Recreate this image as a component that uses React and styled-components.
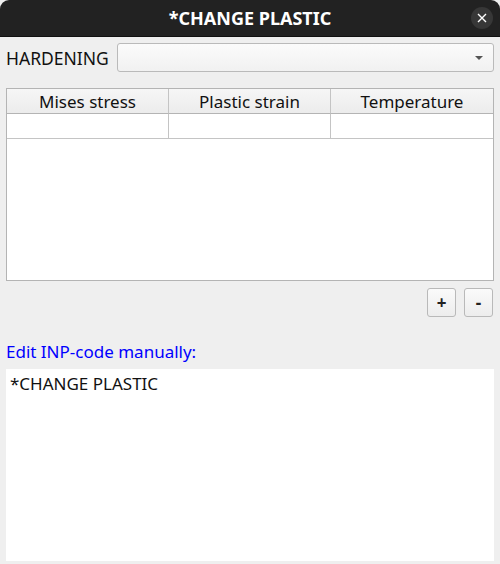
import React from 'react';
import styled, { createGlobalStyle } from 'styled-components';

const GlobalStyle = createGlobalStyle`
  html, body {
    margin: 0;
    padding: 0;
    background: #efefef;
  }
  body {
    font-family: 'Noto Sans', 'DejaVu Sans', sans-serif;
    color: #111111;
  }
`;

const Window = styled.div`
  width: 500px;
  height: 564px;
  display: flex;
  flex-direction: column;
  background: #efefef;
  overflow: hidden;
`;

const TitleBar = styled.div`
  position: relative;
  height: 36px;
  flex: none;
  display: flex;
  align-items: center;
  justify-content: center;
  background: #222222;
  border-radius: 9px 9px 0 0;
  border-bottom: 1px solid #111;
  color: #ffffff;
  font-weight: 700;
  font-size: 18px;
`;

const CloseButton = styled.div`
  position: absolute;
  right: 7px;
  top: 7px;
  width: 22px;
  height: 22px;
  border-radius: 50%;
  background: #373737;
  display: flex;
  align-items: center;
  justify-content: center;
`;

const Body = styled.div`
  flex: 1;
  display: flex;
  flex-direction: column;
  padding: 6px 6px 3px 6px;
`;

const Row = styled.div`
  display: flex;
  align-items: center;
  gap: 8px;
  height: 29px;
  font-size: 17.5px;
`;

const Combo = styled.div`
  flex: 1;
  height: 27px;
  border: 1px solid #bababa;
  border-radius: 3px;
  background: linear-gradient(#fbfbfb, #f1f1f1);
  display: flex;
  align-items: center;
  justify-content: flex-end;
  padding-right: 10px;
`;

const Arrow = styled.div`
  width: 0;
  height: 0;
  border-left: 4px solid transparent;
  border-right: 4px solid transparent;
  border-top: 4px solid #555;
`;

const Table = styled.div`
  margin-top: 16px;
  height: 191px;
  border: 1px solid #b4b4b4;
  background: #ffffff;
  display: flex;
  flex-direction: column;
`;

const Grid = styled.div`
  display: grid;
  grid-template-columns: 162px 162px 1fr;
`;

const HeadCell = styled.div`
  height: 24px;
  display: flex;
  align-items: center;
  justify-content: center;
  font-size: 17px;
  background: linear-gradient(#f6f6f6, #ececec);
  border-bottom: 1px solid #b4b4b4;
  border-right: ${p => (p.last ? 'none' : '1px solid #c4c4c4')};
`;

const Cell = styled.div`
  height: 24px;
  background: #fff;
  border-bottom: 1px solid #c4c4c4;
  border-right: ${p => (p.last ? 'none' : '1px solid #c4c4c4')};
`;

const ButtonRow = styled.div`
  display: flex;
  justify-content: flex-end;
  gap: 8px;
  margin-top: 7px;
  padding-right: 1px;
`;

const SmallButton = styled.button`
  width: 29px;
  height: 29px;
  padding: 0;
  border: 1px solid #b9b9b9;
  border-radius: 3px;
  background: linear-gradient(#fafafa, #ededed);
  font-family: 'Noto Sans', sans-serif;
  font-size: 17px;
  font-weight: 700;
  color: #222;
  display: flex;
  align-items: center;
  justify-content: center;
`;

const EditLabel = styled.div`
  margin-top: 24px;
  color: #0000ff;
  font-size: 17px;
  line-height: 22px;
`;

const Editor = styled.div`
  flex: 1;
  margin-top: 6px;
  background: #ffffff;
  padding: 4px 4px;
  font-size: 17px;
  line-height: 22px;
`;

const headers = ['Mises stress', 'Plastic strain', 'Temperature'];

export default function App() {
  return (
    <Window>
      <GlobalStyle />
      <TitleBar>
        *CHANGE PLASTIC
        <CloseButton>
          <svg width="10" height="10" viewBox="0 0 10 10">
            <path d="M1 1 L9 9 M9 1 L1 9" stroke="#fff" strokeWidth="1.4" />
          </svg>
        </CloseButton>
      </TitleBar>
      <Body>
        <Row>
          <span>HARDENING</span>
          <Combo>
            <Arrow />
          </Combo>
        </Row>
        <Table>
          <Grid>
            {headers.map((h, i) => (
              <HeadCell key={h} last={i === 2}>{h}</HeadCell>
            ))}
            {headers.map((h, i) => (
              <Cell key={h} last={i === 2} />
            ))}
          </Grid>
        </Table>
        <ButtonRow>
          <SmallButton>+</SmallButton>
          <SmallButton>-</SmallButton>
        </ButtonRow>
        <EditLabel>Edit INP-code manually:</EditLabel>
        <Editor>*CHANGE PLASTIC</Editor>
      </Body>
    </Window>
  );
}
